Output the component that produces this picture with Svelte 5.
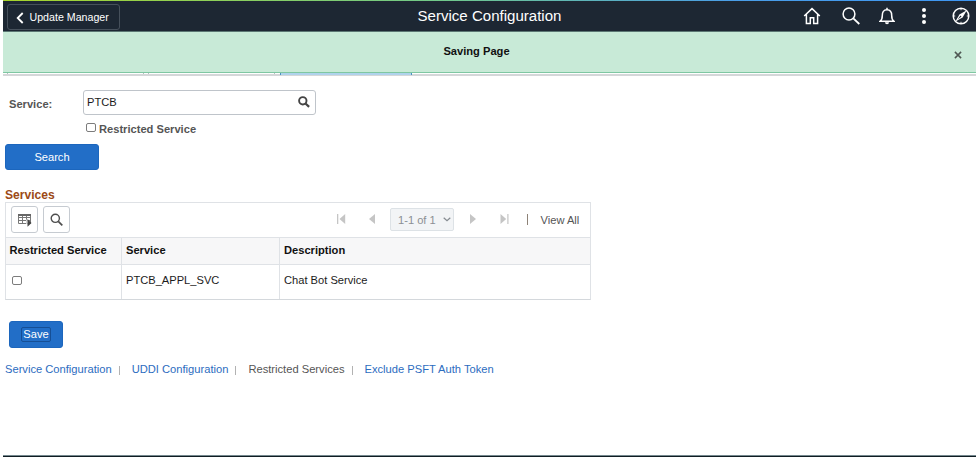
<script>
  let service = $state('PTCB');
  const links = ['Service Configuration', 'UDDI Configuration', 'Restricted Services', 'Exclude PSFT Auth Token'];
</script>

<div class="page">
  <header>
    <button class="back">
      <svg width="8" height="12" viewBox="0 0 8 12"><path d="M6.7 1 1.7 6l5 5" fill="none" stroke="#fff" stroke-width="1.8" /></svg>
      <span>Update Manager</span>
    </button>
    <h1>Service Configuration</h1>
    <nav class="icons">
      <svg width="18" height="18" viewBox="0 0 18 18"><path d="M1.2 9 9 1.6 16.8 9M3.4 7.2v9.2h3.9v-5.6h3.4v5.6h3.9V7.2" /></svg>
      <svg width="18" height="18" viewBox="0 0 18 18"><circle cx="7" cy="7" r="5.9" /><path d="m11.3 11.3 6 5.7" stroke-width="1.8" /></svg>
      <svg width="16" height="18" viewBox="0 0 16 18"><path d="M1.2 14.2h13.6c-1.9-1.4-2.1-3-2.1-5.7 0-3.2-1.2-5.8-4.7-5.8S3.3 5.3 3.3 8.5c0 2.7-.2 4.3-2.1 5.7ZM8 2.7V.8" /><path d="M6 15.2a2 2 0 0 0 4 0Z" fill="#fff" stroke="none" /></svg>
      <svg width="6" height="18" viewBox="0 0 6 18"><g fill="#fff" stroke="none"><circle cx="3" cy="3" r="2" /><circle cx="3" cy="9" r="2" /><circle cx="3" cy="15" r="2" /></g></svg>
      <svg width="18" height="18" viewBox="0 0 18 18"><circle cx="9" cy="9" r="7.8" /><path d="M9 1.2v2M9 14.8v2M1.2 9h2M14.8 9h2" stroke-width="1" /><path d="M14.8 3.2 7.4 7.6 3.4 14.6l7.2-4.2Z" fill="#fff" stroke="none" /><path d="m5.6 12.4 3.9-2.8-1-1Z" fill="#1d2733" stroke="none" /></svg>
    </nav>
  </header>

  <div class="banner">
    <strong>Saving Page</strong>
    <svg class="close" width="8" height="8" viewBox="0 0 8 8"><path d="m.9.9 6.2 6.2m0-6.2L.9 7.1" fill="none" stroke="#4f5753" stroke-width="1.5" /></svg>
  </div>
  <div class="tabs"><i class="one"></i><i class="two"></i><i class="active"></i></div>

  <main>
    <div class="field">
      <label for="service">Service:</label>
      <div class="lookup">
        <input id="service" bind:value={service} />
        <svg width="12" height="12" viewBox="0 0 12 12"><circle cx="4.8" cy="4.8" r="3.7" fill="none" stroke="#444" stroke-width="1.9" /><path d="m7.5 7.5 3.6 3.4" stroke="#444" stroke-width="2.2" /></svg>
      </div>
    </div>
    <label class="restricted"><input class="check" type="checkbox" />Restricted Service</label>
    <button class="primary search">Search</button>

    <h2>Services</h2>
    <section class="grid">
      <div class="toolbar">
        <button class="tool" aria-label="Grid actions">
          <svg width="14" height="14" viewBox="0 0 14 14"><path d="M.5 1.5h12v9H.5ZM.5 4.5h12M.5 7.5h12M4.5 2v8.5M8.5 2v8.5" fill="none" stroke="#777" /><path d="M0 1h13v2H0Z" fill="#666" /><path d="M8.3 6.5h1.3v7H8.3Z" fill="#fff" /><path d="m9.5 6 4 4-4 3.8Z" fill="#444" /></svg>
        </button>
        <button class="tool find" aria-label="Find">
          <svg width="13" height="13" viewBox="0 0 13 13"><circle cx="5.3" cy="5.3" r="4.1" fill="none" stroke="#4d4d4d" stroke-width="1.4" /><path d="m8.3 8.3 4 4" stroke="#4d4d4d" stroke-width="1.7" /></svg>
        </button>
        <div class="pager">
          <svg width="9" height="10" viewBox="0 0 9 10"><path d="M0 0h1.3v10H0ZM8.2 0v10L2.5 5Z" /></svg>
          <svg class="prev" width="6" height="10" viewBox="0 0 6 10"><path d="M6 0v10L0 5Z" /></svg>
          <div class="range">1-1 of 1<svg width="8" height="5" viewBox="0 0 8 5"><path d="m.7.8 3.3 3 3.3-3" style:fill="none" stroke="#858b91" stroke-width="1.2" /></svg></div>
          <svg class="next" width="6" height="10" viewBox="0 0 6 10"><path d="M0 0v10l6-5Z" /></svg>
          <svg class="last" width="9" height="10" viewBox="0 0 9 10"><path d="M.5 0v10l5.7-5ZM7.3 0h1.2v10H7.3Z" /></svg>
          <i class="bar"></i>
          <a class="all" href="#all">View All</a>
        </div>
      </div>
      <div class="row head"><span>Restricted Service</span><span>Service</span><span>Description</span></div>
      <div class="row body"><span><input class="check" type="checkbox" aria-label="Restricted" /></span><span>PTCB_APPL_SVC</span><span>Chat Bot Service</span></div>
    </section>

    <button class="primary save"><span>Save</span></button>
    <nav class="links">
      {#each links as link, i}
        {#if i}<i></i>{/if}
        {#if i === 2}<span>{link}</span>{:else}<a href="#{i}">{link}</a>{/if}
      {/each}
    </nav>
  </main>
  <footer></footer>
</div>

<style>
  :global(body) { background: #fff; overflow: hidden; }
  .page, .page * { box-sizing: border-box; }
  .page { width: 976px; height: 457px; padding-left: 3px; display: flex; flex-direction: column; font: 11.13px/14px "Liberation Sans", Arial, sans-serif; color: #1c1c1c; }
  button, input { font: inherit; margin: 0; padding: 0; }
  svg { display: block; flex: none; }
  a { text-decoration: none; }
  header { height: 32px; flex: none; display: grid; grid-template-columns: 1fr auto 1fr; align-items: center; background: linear-gradient(90deg, #a8d52b, #71c98b 45%, #4a9ee8 75%, #3e96f2) top / 100% 1px no-repeat, #1d2733; border-bottom: 1px solid #5b7773; }
  .back { width: 113px; height: 26px; margin: 3px 0 0 4px; padding-left: 8px; display: flex; align-items: center; gap: 5.5px; background: none; border: 1px solid #46505b; border-radius: 3px; color: #fff; font-size: 10.65px; }
  .back svg { margin-top: 2px; }
  .back span { white-space: nowrap; }
  h1 { margin: 1px 0 0; font-size: 15.05px; line-height: 18px; font-weight: 400; color: #fff; }
  .icons { justify-self: end; display: flex; align-items: center; padding: 1px 6px 0 0; }
  .icons svg { fill: none; stroke: #fff; stroke-width: 1.5; }
  .icons svg:nth-child(2) { margin-left: 21px; }
  .icons svg:nth-child(3) { margin-left: 19px; }
  .icons svg:nth-child(4) { margin-left: 26px; }
  .icons svg:nth-child(5) { margin-left: 25px; }
  .banner { height: 41px; flex: none; display: grid; grid-template-columns: 1fr auto 1fr; background: #c8ead7; border-bottom: 1px solid #7fc7a2; }
  .banner strong { grid-column: 2; margin: 12px 26px 0 0; color: #111; }
  .close { justify-self: end; margin: 19px 14px 0 0; }
  .tabs { height: 3px; flex: none; display: flex; border-bottom: 2px solid #d5d7d9; }
  .tabs i { height: 1px; }
  .one { width: 137px; margin-left: 4px; border: solid #b9bec3; border-width: 0 1px; }
  .two { width: 127px; margin-left: 4px; border: solid #b9bec3; border-width: 0 1px; }
  .tabs .active { width: 132px; height: 2px; margin-left: 5px; background: #afd3ec; border: solid #4b93be; border-width: 0 1px; }
  main { flex: 1; padding: 14px 0 0 2px; }
  .field { display: flex; }
  .field label { width: 78px; padding: 7px 0 0 4px; font-weight: 700; color: #555; }
  .lookup { width: 233px; height: 25px; display: flex; align-items: center; border: 1px solid #bfc4ca; border-radius: 3px; }
  .lookup input { width: 214px; height: 21px; padding: 0 0 1px 3px; border: 0; outline: 0; background: none; color: #1c1c1c; }
  .lookup svg { margin: -2px 0 0 0; }
  .restricted { display: flex; align-items: center; gap: 3px; margin: 7px 0 0 81px; height: 14px; font-weight: 700; color: #555; }
  .check { appearance: none; width: 10px; height: 9px; border: 1px solid #7c7c7c; border-radius: 2px; background: #fff; display: block; }
  .restricted .check { margin-top: -3px; }
  .primary { display: block; background: #226ec7; border: 1px solid #1c66bd; border-radius: 3px; color: #fff; }
  .search { width: 94px; height: 26px; margin-top: 8px; padding-bottom: 1px; }
  h2 { margin: 18px 0 0; font-size: 12.1px; line-height: 14px; color: #9c4a16; }
  .grid { width: 586px; height: 98px; border: 1px solid #dfe2e6; border-bottom-color: #d4d8dc; }
  .toolbar { height: 34px; display: flex; padding: 3px 0 0 5px; }
  .tool { width: 27px; height: 27px; display: grid; place-items: center; background: #fff; border: 1px solid #c6cbd1; border-radius: 3px; }
  .find { margin-left: 5px; }
  .pager { display: flex; align-items: center; height: 27px; margin-left: 267px; fill: #c5c5c5; color: #555; }
  .pager svg { margin-top: -1px; }
  .pager .prev { margin-left: 23px; }
  .range { width: 64px; height: 23px; margin-left: 15px; padding-left: 7px; display: flex; align-items: center; gap: 7px; background: #f2f4f6; border: 1px solid #dde2e6; border-radius: 2px; color: #8b8f94; white-space: nowrap; }
  .pager .next { margin-left: 16px; }
  .pager .last { margin-left: 24px; }
  .bar { width: 1px; height: 11px; margin-left: 18px; background: #8d8277; }
  .all { margin-left: 12.5px; color: #555; white-space: nowrap; }
  .row { display: grid; grid-template-columns: 115px 158px 1fr; }
  .row span { display: flex; align-items: center; padding: 0 0 2px 3.5px; border-left: 1px solid #dfe2e6; white-space: nowrap; }
  .row span:first-child { border-left: 0; }
  .row span + span { padding-left: 4px; }
  .head { height: 28px; background: #f7f7f8; border: solid #dfe2e6; border-width: 1px 0; font-weight: 700; color: #111; }
  .row.body { height: 34px; }
  .row.body span:first-child { padding-left: 6px; }
  .row.body span { padding-bottom: 4px; }
  .save { width: 54px; height: 27px; margin: 21px 0 0 4px; }
  .save span { display: inline-block; height: 15px; line-height: 13px; padding: 0 1px; border: 1px solid #164f95; border-radius: 2px; }
  .links { display: flex; align-items: center; margin-top: 14px; color: #555; font-size: 11.16px; white-space: nowrap; }
  .links a { color: #2c6cc0; }
  .links i { width: 1px; height: 9px; margin: 3px 12px 0 7px; background: #b2b2b2; }
  footer { height: 2px; flex: none; background: #101c23; border-top: 1px solid #75888e; }
</style>
